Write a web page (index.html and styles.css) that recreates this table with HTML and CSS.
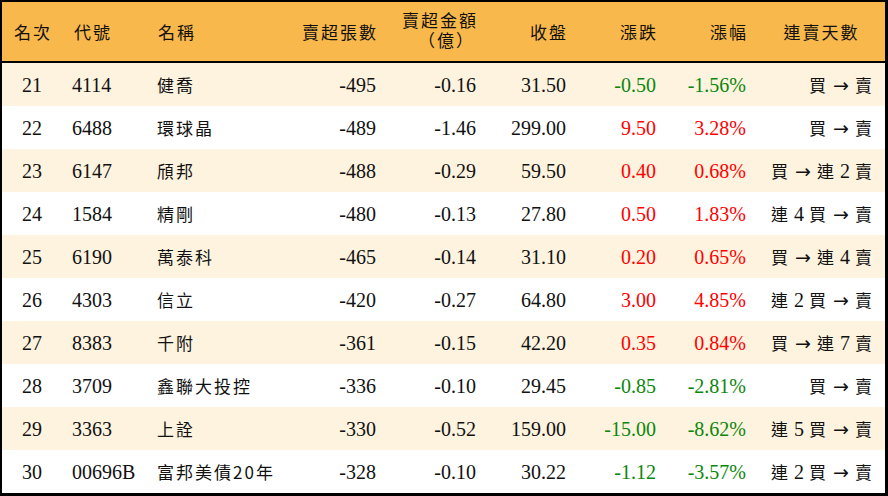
FILE: index.html
```
<!DOCTYPE html>
<html lang="zh-Hant">
<head>
<meta charset="utf-8">
<title>賣超排行</title>
<link rel="stylesheet" href="styles.css">
</head>
<body>
<table class="rank">
  <colgroup>
    <col class="w-rank"><col class="w-code"><col class="w-name"><col class="w-vol"><col class="w-amt"><col class="w-close"><col class="w-chg"><col class="w-pct"><col class="w-days">
  </colgroup>
  <thead>
    <tr>
      <th class="c">名次</th>
      <th class="l code">代號</th>
      <th class="l name">名稱</th>
      <th class="r">賣超張數</th>
      <th class="r two"><span class="ln">賣超金額</span><span class="ln">（億）</span></th>
      <th class="r">收盤</th>
      <th class="r">漲跌</th>
      <th class="r">漲幅</th>
      <th class="c days">連賣天數</th>
    </tr>
  </thead>
  <tbody>
    <tr class="odd"><td class="c">21</td><td class="l code">4114</td><td class="l name">健喬</td><td class="r">-495</td><td class="r">-0.16</td><td class="r">31.50</td><td class="r dn">-0.50</td><td class="r dn">-1.56%</td><td class="r days"><span class="cj">買</span> <span class="ar">→</span> <span class="cj">賣</span></td></tr>
    <tr><td class="c">22</td><td class="l code">6488</td><td class="l name">環球晶</td><td class="r">-489</td><td class="r">-1.46</td><td class="r">299.00</td><td class="r up">9.50</td><td class="r up">3.28%</td><td class="r days"><span class="cj">買</span> <span class="ar">→</span> <span class="cj">賣</span></td></tr>
    <tr class="odd"><td class="c">23</td><td class="l code">6147</td><td class="l name">頎邦</td><td class="r">-488</td><td class="r">-0.29</td><td class="r">59.50</td><td class="r up">0.40</td><td class="r up">0.68%</td><td class="r days"><span class="cj">買</span> <span class="ar">→</span> <span class="cj">連</span> 2 <span class="cj">賣</span></td></tr>
    <tr><td class="c">24</td><td class="l code">1584</td><td class="l name">精剛</td><td class="r">-480</td><td class="r">-0.13</td><td class="r">27.80</td><td class="r up">0.50</td><td class="r up">1.83%</td><td class="r days"><span class="cj">連</span> 4 <span class="cj">買</span> <span class="ar">→</span> <span class="cj">賣</span></td></tr>
    <tr class="odd"><td class="c">25</td><td class="l code">6190</td><td class="l name">萬泰科</td><td class="r">-465</td><td class="r">-0.14</td><td class="r">31.10</td><td class="r up">0.20</td><td class="r up">0.65%</td><td class="r days"><span class="cj">買</span> <span class="ar">→</span> <span class="cj">連</span> 4 <span class="cj">賣</span></td></tr>
    <tr><td class="c">26</td><td class="l code">4303</td><td class="l name">信立</td><td class="r">-420</td><td class="r">-0.27</td><td class="r">64.80</td><td class="r up">3.00</td><td class="r up">4.85%</td><td class="r days"><span class="cj">連</span> 2 <span class="cj">買</span> <span class="ar">→</span> <span class="cj">賣</span></td></tr>
    <tr class="odd"><td class="c">27</td><td class="l code">8383</td><td class="l name">千附</td><td class="r">-361</td><td class="r">-0.15</td><td class="r">42.20</td><td class="r up">0.35</td><td class="r up">0.84%</td><td class="r days"><span class="cj">買</span> <span class="ar">→</span> <span class="cj">連</span> 7 <span class="cj">賣</span></td></tr>
    <tr><td class="c">28</td><td class="l code">3709</td><td class="l name">鑫聯大投控</td><td class="r">-336</td><td class="r">-0.10</td><td class="r">29.45</td><td class="r dn">-0.85</td><td class="r dn">-2.81%</td><td class="r days"><span class="cj">買</span> <span class="ar">→</span> <span class="cj">賣</span></td></tr>
    <tr class="odd"><td class="c">29</td><td class="l code">3363</td><td class="l name">上詮</td><td class="r">-330</td><td class="r">-0.52</td><td class="r">159.00</td><td class="r dn">-15.00</td><td class="r dn">-8.62%</td><td class="r days"><span class="cj">連</span> 5 <span class="cj">買</span> <span class="ar">→</span> <span class="cj">賣</span></td></tr>
    <tr><td class="c">30</td><td class="l code">00696B</td><td class="l name"><span class="cj">富邦美債</span>20<span class="cj">年</span></td><td class="r">-328</td><td class="r">-0.10</td><td class="r">30.22</td><td class="r dn">-1.12</td><td class="r dn">-3.57%</td><td class="r days"><span class="cj">連</span> 2 <span class="cj">買</span> <span class="ar">→</span> <span class="cj">賣</span></td></tr>
  </tbody>
</table>
</body>
</html>
```
FILE: styles.css
```
html, body {
  margin: 0;
  padding: 0;
  background: #ffffff;
}
body {
  font-family: "Liberation Serif", "Noto Sans CJK TC", serif;
  font-size: 20px;
  color: #111111;
}
.rank {
  width: 888px;
  table-layout: fixed;
  border-collapse: separate;
  border-spacing: 0;
  border-style: solid;
  border-color: #000000;
  border-width: 2px 3px 3px 2px;
}
.w-rank { width: 60px; }
.w-code { width: 88px; }
.w-name { width: 140px; }
.w-vol { width: 96px; }
.w-amt { width: 100px; }
.w-close { width: 90px; }
.w-chg { width: 90px; }
.w-pct { width: 90px; }
.w-days { width: 129px; }

.rank th {
  height: 59px;
  padding: 0 8px 0 0;
  background: #f9b84b;
  border-bottom: 2px solid #000000;
  font-family: "Noto Sans CJK TC", sans-serif;
  font-weight: 400;
  font-size: 17px;
  letter-spacing: 2px;
  line-height: 20px;
  vertical-align: middle;
  white-space: nowrap;
}
.rank th.two .ln {
  display: block;
  height: 20px;
  line-height: 20px;
  font-family: "Liberation Serif", "Noto Sans CJK TC", serif;
  font-size: 17px;
}
.rank th.two .ln + .ln {
  padding-right: 3px;
}
.rank td {
  height: 43px;
  padding: 0 10px 0 0;
  vertical-align: middle;
  white-space: nowrap;
  line-height: 22px;
}
.rank tr.odd td {
  background: #fef3df;
}
.c { text-align: center; }
.l { text-align: left; }
.r { text-align: right; }
.rank th.c, .rank td.c { padding: 0; }
.rank th.c { padding-left: 2px; }
.rank .code { padding-left: 10px; }
.rank th.code { padding-left: 12px; }
.rank .name { padding-left: 7px; }
.rank th.name { padding-left: 8px; }
.rank td.days { padding-right: 12px; }
.rank th.days { padding: 0 0 0 2px; }
.cj {
  font-family: "Noto Sans CJK TC", sans-serif;
  font-size: 17px;
  letter-spacing: 1px;
}
.ar {
  font-family: "DejaVu Sans", sans-serif;
  font-size: 19px;
  margin: 0 1px;
}
.rank td.name {
  font-family: "Noto Sans CJK TC", sans-serif;
  font-size: 17px;
  letter-spacing: 2px;
}
.rank td.name .cj { letter-spacing: 2px; }
.up { color: #ff0000; }
.dn { color: #0b870b; }
```
